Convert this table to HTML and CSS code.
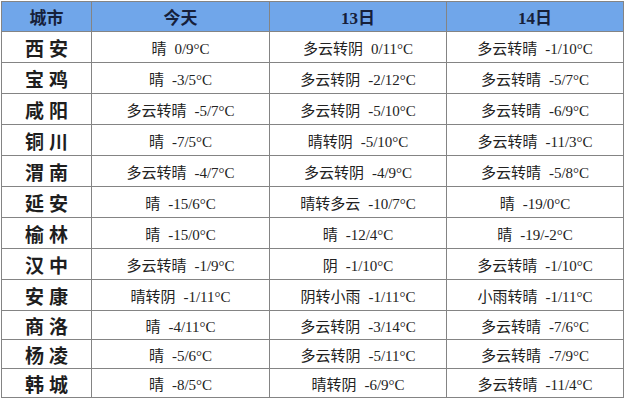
FILE: index.html
```html
<!DOCTYPE html>
<html lang="zh">
<head>
<meta charset="utf-8">
<link rel="stylesheet" href="styles.css">
</head>
<body>
<table class="wx">
  <colgroup>
    <col class="c-city"><col class="c-a"><col class="c-b"><col class="c-c">
  </colgroup>
  <thead>
    <tr class="head">
      <th>城市</th><th>今天</th><th>13日</th><th>14日</th>
    </tr>
  </thead>
  <tbody>
    <tr class="r31"><td class="city">西安</td><td><span class="w">晴</span>0/9°C</td><td><span class="w">多云转阴</span>0/11°C</td><td><span class="w">多云转晴</span>-1/10°C</td></tr>
    <tr class="r31"><td class="city">宝鸡</td><td><span class="w">晴</span>-3/5°C</td><td><span class="w">多云转阴</span>-2/12°C</td><td><span class="w">多云转晴</span>-5/7°C</td></tr>
    <tr class="r31"><td class="city">咸阳</td><td><span class="w">多云转晴</span>-5/7°C</td><td><span class="w">多云转阴</span>-5/10°C</td><td><span class="w">多云转晴</span>-6/9°C</td></tr>
    <tr class="r31"><td class="city">铜川</td><td><span class="w">晴</span>-7/5°C</td><td><span class="w">晴转阴</span>-5/10°C</td><td><span class="w">多云转晴</span>-11/3°C</td></tr>
    <tr class="r31"><td class="city">渭南</td><td><span class="w">多云转晴</span>-4/7°C</td><td><span class="w">多云转阴</span>-4/9°C</td><td><span class="w">多云转晴</span>-5/8°C</td></tr>
    <tr class="r31"><td class="city">延安</td><td><span class="w">晴</span>-15/6°C</td><td><span class="w">晴转多云</span>-10/7°C</td><td><span class="w">晴</span>-19/0°C</td></tr>
    <tr class="r31"><td class="city">榆林</td><td><span class="w">晴</span>-15/0°C</td><td><span class="w">晴</span>-12/4°C</td><td><span class="w">晴</span>-19/-2°C</td></tr>
    <tr class="r31"><td class="city">汉中</td><td><span class="w">多云转晴</span>-1/9°C</td><td><span class="w">阴</span>-1/10°C</td><td><span class="w">多云转晴</span>-1/10°C</td></tr>
    <tr class="r31"><td class="city">安康</td><td><span class="w">晴转阴</span>-1/11°C</td><td><span class="w">阴转小雨</span>-1/11°C</td><td><span class="w">小雨转晴</span>-1/11°C</td></tr>
    <tr class="r29"><td class="city">商洛</td><td><span class="w">晴</span>-4/11°C</td><td><span class="w">多云转阴</span>-3/14°C</td><td><span class="w">多云转晴</span>-7/6°C</td></tr>
    <tr class="r29"><td class="city">杨凌</td><td><span class="w">晴</span>-5/6°C</td><td><span class="w">多云转阴</span>-5/11°C</td><td><span class="w">多云转晴</span>-7/9°C</td></tr>
    <tr class="r29"><td class="city">韩城</td><td><span class="w">晴</span>-8/5°C</td><td><span class="w">晴转阴</span>-6/9°C</td><td><span class="w">多云转晴</span>-11/4°C</td></tr>
  </tbody>
</table>
</body>
</html>
```

FILE: styles.css
```css
html, body {
  margin: 0;
  padding: 0;
  background: #ffffff;
}
body {
  padding: 1px 0 0 1px;
}
.wx {
  border-collapse: collapse;
  table-layout: fixed;
  width: 622px;
  font-family: "Liberation Serif", "Noto Sans CJK SC", serif;
  color: #222222;
}
.c-city { width: 90px; }
.c-a { width: 178px; }
.c-b { width: 177px; }
.c-c { width: 177px; }
.wx th, .wx td {
  border: 1px solid #848484;
  padding: 0;
  text-align: center;
  vertical-align: middle;
}
.head {
  height: 30px;
  background: #70a6ea;
}
.head th {
  font-size: 17px;
  font-weight: bold;
  color: #16203a;
}
.r31 { height: 31px; }
.r29 { height: 29px; }
.wx td {
  font-size: 15px;
}
.wx td.city {
  font-size: 19px;
  font-weight: bold;
  letter-spacing: 5px;
  text-indent: 5px;
  color: #1e1e1e;
}
.w {
  margin-right: 8px;
}
```
